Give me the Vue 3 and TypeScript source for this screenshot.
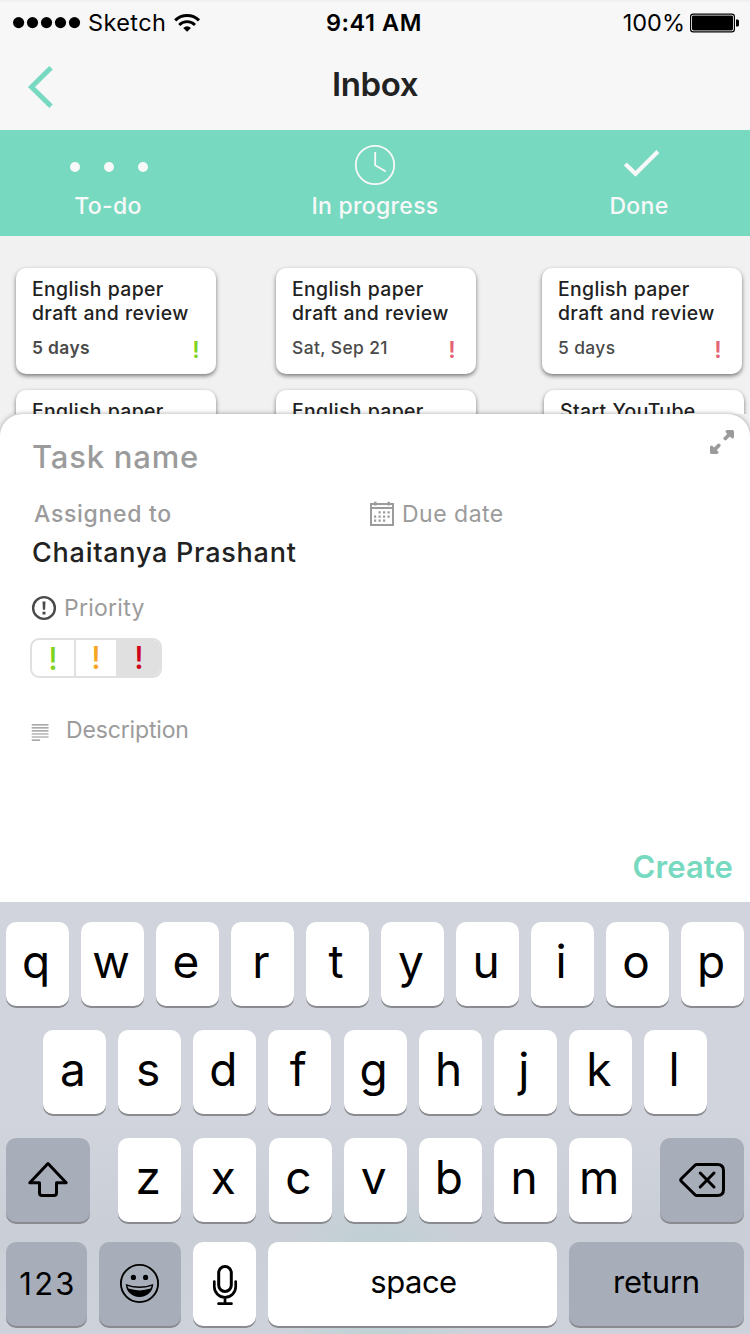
<script setup lang="ts">
interface Task {
  title: string[]
  due?: string
  level?: 'low' | 'high'
  strong?: boolean
}
interface Column {
  id: string
  tasks: Task[]
}

const columns: Column[] = [
  {
    id: 'todo',
    tasks: [
      { title: ['English paper', 'draft and review'], due: '5 days', level: 'low', strong: true },
      { title: ['English paper'] },
    ],
  },
  {
    id: 'progress',
    tasks: [
      { title: ['English paper', 'draft and review'], due: 'Sat, Sep 21', level: 'high' },
      { title: ['English paper'] },
    ],
  },
  {
    id: 'done',
    tasks: [
      { title: ['English paper', 'draft and review'], due: '5 days', level: 'high' },
      { title: ['Start YouTube'] },
    ],
  },
]

const topRow = 'qwertyuiop'.split('')
const midRow = 'asdfghjkl'.split('')
const lowRow = 'zxcvbnm'.split('')
const signalDots = [6.6, 20.5, 34.5, 48.5, 62.5]
</script>

<template>
  <div class="screen">
    <header class="top">
      <div class="status">
        <div class="carrier">
          <svg class="signal" width="70" height="14" viewBox="0 0.4 70 14">
            <circle v-for="x in signalDots" :key="x" :cx="x" cy="7" r="5.6" />
          </svg>
          <span class="carrier-name">Sketch</span>
          <svg width="28" height="20" viewBox="174 12 28 20" fill="none" stroke="#000">
            <path d="M176.2 19.4a17 17 0 0 1 23.8 0" stroke-width="3" />
            <path d="M180.2 23.9a11.2 11.2 0 0 1 15.8 0" stroke-width="2.8" />
            <path d="M184.2 27q3.9-3.6 7.8 0l-3.9 3.8z" fill="#000" stroke="none" />
          </svg>
        </div>
        <span class="time">9:41 AM</span>
        <div class="battery">
          <span class="percent">100%</span>
          <svg width="50" height="20" viewBox="690 12.5 50 20">
            <rect x="690.6" y="13.6" width="43.8" height="17.8" rx="2.6" fill="#fff" stroke="#000" stroke-width="1.2" />
            <rect x="692" y="15" width="41" height="15" rx="1.4" />
            <path d="M736 19h1.5q1.5 0 1.5 1.5v4q0 1.500-1.500 1.500h-1.500z" />
          </svg>
        </div>
      </div>
      <div class="nav">
        <svg class="back" width="30" height="46" viewBox="26.300 64 30 46" fill="none" stroke="#77d9c0" stroke-width="5">
          <path d="M51.300 67.700L31.800 87l19.500 19.300" />
        </svg>
        <h1>Inbox</h1>
      </div>
    </header>

    <nav class="tabs">
      <div class="tab tab-todo">
        <svg width="82" height="44" viewBox="67 143 82 44" fill="#f8f8f8">
          <circle cx="75" cy="167" r="5" /><circle cx="109" cy="167" r="5" /><circle cx="143" cy="167" r="5" />
        </svg>
        <span>To-do</span>
      </div>
      <div class="tab tab-progress">
        <svg width="44" height="44" viewBox="353 143 44 44" fill="none" stroke="#f8f8f8">
          <circle cx="375" cy="165" r="19.200" stroke-width="1.800" />
          <path d="M375.200 152v13.200l10.600 6.300" stroke-width="1.800" />
        </svg>
        <span>In progress</span>
      </div>
      <div class="tab tab-done">
        <svg width="44" height="44" viewBox="617 143 44 44" fill="none" stroke="#f8f8f8" stroke-width="4.200">
          <path d="M625.300 164l10.200 9.700 22.400-22.200" />
        </svg>
        <span>Done</span>
      </div>
    </nav>

    <main class="board">
      <div v-for="col in columns" :key="col.id" class="column" :class="col.id">
        <article v-for="(task, i) in col.tasks" :key="i" class="card">
          <div class="card-title">
            <div v-for="line in task.title" :key="line">{{ line }}</div>
          </div>
          <div v-if="task.due" class="card-foot">
            <span class="due" :class="{ strong: task.strong }">{{ task.due }}</span>
            <span class="flag" :class="task.level">!</span>
          </div>
        </article>
      </div>
    </main>

    <section class="sheet">
      <div class="sheet-head">
        <span class="task-name">Task name</span>
        <svg class="expand" width="26" height="26" viewBox="709 429 26 26" fill="#9b9b9b" stroke="#9b9b9b" stroke-linecap="round" stroke-linejoin="round">
          <path d="M727 431.500h5.500v5.500z" stroke-width="3" />
          <path d="M725.300 438.500l5-5" stroke-width="3.800" />
          <path d="M717 452.500h-5.500v-5.500z" stroke-width="3" />
          <path d="M718.700 445.500l-5 5" stroke-width="3.800" />
        </svg>
      </div>
      <div class="meta">
        <span class="assigned">Assigned to</span>
        <div class="due-date">
          <svg width="26" height="28" viewBox="369 500 26 28" fill="#9b9b9b">
            <path d="M370 503h24v23h-24zM372 509v15h20v-15zM372 505v2h20v-2z" fill-rule="evenodd" />
            <path d="M374 501.800h2.500v3.600h-2.500zM387.500 501.800h2.500v3.600h-2.500z" />
            <path d="M378.500 511.300h2.200v2.200h-2.200zM383 511.300h2.200v2.200h-2.200zM387.500 511.300h2.200v2.200h-2.200zM374 515.500h2.200v2.200h-2.200zM378.500 515.500h2.200v2.200h-2.200zM383 515.500h2.200v2.200h-2.200zM387.500 515.500h2.200v2.200h-2.200zM374 519.600h2.200v2.200h-2.200zM378.500 519.600h2.200v2.200h-2.200zM383 519.600h2.200v2.200h-2.200z" />
          </svg>
          <span>Due date</span>
        </div>
      </div>
      <div class="assignee">Chaitanya Prashant</div>
      <div class="priority-label">
        <svg width="26" height="26" viewBox="31 595 26 26">
          <circle cx="44" cy="608" r="10.900" fill="none" stroke="#4a4a4a" stroke-width="2.400" />
          <path d="M42.500 601.500h3l-.4 8.300h-2.200zM42.500 611.700h3v2.900h-3z" fill="#4a4a4a" />
        </svg>
        <span>Priority</span>
      </div>
      <div class="segments">
        <span class="seg low">!</span>
        <span class="seg medium">!</span>
        <span class="seg high active">!</span>
      </div>
      <div class="description">
        <svg width="18" height="18" viewBox="31 721.500 18 18" stroke="#8f8f8f" stroke-width="1.200">
          <path d="M31.700 723.300h16.800M31.700 726.400h16.800M31.700 729.400h16.800M31.700 732.500h16.800M31.700 735.500h16.800M31.700 738.600h8.400" />
        </svg>
        <span>Description</span>
      </div>
      <button class="create" type="button">Create</button>
    </section>

    <section class="keyboard">
      <div class="row">
        <span v-for="k in topRow" :key="k" class="key"><span class="glyph">{{ k }}</span></span>
      </div>
      <div class="row middle">
        <span v-for="k in midRow" :key="k" class="key"><span class="glyph">{{ k }}</span></span>
      </div>
      <div class="row">
        <span class="key dark wide">
          <svg width="84" height="84" viewBox="6 1138 84 84" fill="none" stroke="#000" stroke-width="3" stroke-linejoin="round">
            <path d="M48 1163.500l18.200 19.200h-9.700V1193q0 2.500-2.500 2.500h-12q-2.500 0-2.500-2.500v-10.300h-9.700z" />
          </svg>
        </span>
        <div class="letters">
          <span v-for="k in lowRow" :key="k" class="key"><span class="glyph">{{ k }}</span></span>
        </div>
        <span class="key dark wide">
          <svg width="84" height="84" viewBox="660 1138 84 84" fill="none" stroke="#000" stroke-width="3" stroke-linejoin="round" stroke-linecap="round">
            <path d="M697 1164.500h20.500q6 0 6 6v19q0 6-6 6H697q-1.200 0-2-.8l-13.500-13.200q-1.500-1.500 0-3l13.500-13.200q.8-.8 2-.8z" />
            <path d="M700.200 1173l13.800 14M714 1173l-13.800 14" />
          </svg>
        </span>
      </div>
      <div class="row bottom">
        <span class="key dark numbers"><span class="digits">123</span></span>
        <span class="key dark emoji">
          <svg width="82" height="84" viewBox="99 1242 82 84">
            <circle cx="139.500" cy="1283.500" r="18.600" fill="none" stroke="#000" stroke-width="1.900" />
            <circle cx="133.400" cy="1277.400" r="2.600" /><circle cx="145.600" cy="1277.400" r="2.600" />
            <path d="M125.700 1284q13.800 5 27.600 0c-.5 7.500-6 13-13.800 13s-13.300-5.500-13.800-13z" />
            <path d="M127.300 1286q12.200 3.800 24.400 0l-1.200 2.600q-11 3.600-22 0z" fill="#a7adb9" />
          </svg>
        </span>
        <span class="key">
          <svg width="63" height="84" viewBox="193 1242 63 84" fill="none" stroke="#000" stroke-width="3" stroke-linecap="round">
            <rect x="218.700" y="1266.500" width="12.600" height="25" rx="6.300" />
            <path d="M214.300 1281.500v5.200a10.700 10.700 0 0 0 21.400 0v-5.200M225 1297.500v6M218.500 1303.700h13" stroke-width="2.700" />
          </svg>
        </span>
        <span class="key space"><span class="word">space</span></span>
        <span class="key dark return"><span class="word">return</span></span>
      </div>
    </section>
  </div>
</template>

<style>
html,
body {
  margin: 0;
  overflow: hidden;
}
</style>

<style scoped>
.screen,
.screen * {
  box-sizing: border-box;
}
.screen {
  width: 750px;
  height: 1334px;
  display: flex;
  flex-direction: column;
  overflow: hidden;
  background: #f1f1f1;
  font-family: Inter, "Liberation Sans", sans-serif;
  color: #222;
  white-space: nowrap;
}
svg {
  display: block;
  flex: none;
}
.top {
  height: 130px;
  border-top: 2px solid #f1f1f1;
  background: #f7f7f7;
}
.status {
  height: 42px;
  padding: 0 10px 0 12px;
  display: grid;
  grid-template-columns: 354px 1fr auto;
  align-items: center;
  font-size: 23.5px;
  line-height: 42px;
  color: #000;
}
.carrier,
.battery {
  display: flex;
  align-items: center;
}
.carrier {
  width: 314px;
}
.status {
  grid-template-columns: 314px 1fr auto;
}
.battery {
  justify-content: flex-end;
  gap: 5px;
}
.carrier-name {
  margin-left: 6px;
  margin-right: 7px;
  letter-spacing: 0.4px;
}
.time {
  font-weight: 600;
  letter-spacing: 0.55px;
}
.percent {
  letter-spacing: 0;
}
.nav {
  height: 84px;
  display: grid;
  grid-template-columns: 1fr auto 1fr;
  padding: 0 26px;
}
.back {
  margin-top: 20px;
}
h1 {
  margin: 0;
  grid-column: 2;
  font-size: 33px;
  font-weight: 600;
  line-height: 80px;
  letter-spacing: -0.4px;
}
.tabs {
  height: 106px;
  background: #77d9c0;
  color: #f8f8f8;
  display: flex;
  justify-content: space-between;
  padding: 13px 38px 0 35px;
}
.tab {
  display: flex;
  flex-direction: column;
  align-items: center;
  width: 146px;
  font-size: 23px;
  font-weight: 500;
  line-height: 38px;
  letter-spacing: 0.3px;
}
.tab-progress {
  width: 160px;
  margin-left: 3px;
}
.board {
  height: 178px;
  display: flex;
  padding: 32px 0 0 16px;
  overflow: hidden;
}
.column {
  width: 200px;
  flex: none;
  display: flex;
  flex-direction: column;
  gap: 16px;
}
.column.progress {
  margin-left: 60px;
}
.column.done {
  margin-left: 66px;
}
.column.done .card + .card {
  margin-left: 2px;
  margin-right: -2px;
}
.card {
  height: 106px;
  flex: none;
  padding: 9px 16px 0;
  border-radius: 10px;
  background: #fff;
  box-shadow: 0 2px 4px rgba(0, 0, 0, 0.5);
}
.card-title {
  font-size: 19.4px;
  font-weight: 500;
  line-height: 24px;
  letter-spacing: 0.38px;
  word-spacing: 0.3px;
}
.card-foot {
  display: flex;
  justify-content: space-between;
  height: 46px;
}
.due {
  font-size: 17.4px;
  font-weight: 500;
  line-height: 45px;
  letter-spacing: 0.4px;
  color: #4a4a4a;
}
.due.strong {
  font-weight: 600;
}
.flag {
  width: 12px;
  margin-right: 2px;
  text-align: center;
  font-size: 23px;
  font-weight: 600;
  line-height: 50px;
}
.todo .flag {
  margin-right: -2px;
}
.low {
  color: #7ed321;
}
.medium {
  color: #f5a623;
}
.high {
  color: #d0021b;
}
.flag.high {
  color: #e56473;
}
.sheet {
  height: 488px;
  position: relative;
  display: flex;
  flex-direction: column;
  background: #fff;
  border-radius: 22px 22px 0 0;
  box-shadow: 0 0 5px rgba(0, 0, 0, 0.35);
  color: #9b9b9b;
}
.sheet-head {
  height: 80px;
  padding: 15px 15px 0 32px;
  display: flex;
  justify-content: space-between;
}
.task-name {
  font-size: 31px;
  font-weight: 500;
  line-height: 56px;
  letter-spacing: 0.8px;
}
.meta {
  height: 40px;
  display: grid;
  grid-template-columns: 335px 1fr;
  padding-left: 34px;
  font-size: 23px;
  line-height: 40px;
}
.assigned {
  font-weight: 500;
  letter-spacing: 0.7px;
}
.due-date {
  display: flex;
  align-items: center;
  gap: 7px;
  letter-spacing: 0.5px;
}
.assignee {
  height: 36px;
  padding-left: 32px;
  font-size: 27px;
  font-weight: 500;
  line-height: 38px;
  letter-spacing: 0.75px;
  color: #222;
}
.priority-label {
  height: 36px;
  margin-top: 20px;
  padding-left: 31px;
  display: flex;
  align-items: center;
  gap: 7px;
  font-size: 23px;
  line-height: 36px;
  letter-spacing: 0.25px;
}
.segments {
  width: 132px;
  height: 40px;
  margin: 12px 0 0 30px;
  display: grid;
  grid-template-columns: 44px 40px 44px;
  border: 2px solid #e0e0e0;
  border-radius: 9px;
  overflow: hidden;
}
.seg {
  text-align: center;
  font-size: 31px;
  font-weight: 500;
  line-height: 35px;
}
.seg.low {
  border-right: 2px solid #e0e0e0;
  line-height: 37px;
}
.seg.active {
  padding-left: 2px;
  background: #e0e0e0;
}
.description {
  height: 36px;
  margin-top: 34px;
  padding-left: 31px;
  display: flex;
  align-items: center;
  gap: 17px;
  font-size: 23px;
  line-height: 36px;
  letter-spacing: -0.15px;
}
.description svg {
  margin-top: 3px;
}
.create {
  align-self: flex-end;
  margin: 97px 17px 0 0;
  padding: 0;
  border: 0;
  background: none;
  font-family: inherit;
  font-size: 31px;
  font-weight: 600;
  line-height: 44px;
  letter-spacing: 0.1px;
  color: #77d9c0;
}
.keyboard {
  position: relative;
  height: 432px;
  padding: 20px 6px 0;
  display: flex;
  flex-direction: column;
  gap: 24px;
  color: #000;
  background:
    radial-gradient(ellipse 95px 110px at 377px 390px, rgba(174, 210, 207, 0.65), rgba(174, 210, 207, 0) 100%),
    linear-gradient(#d1d4dc 50%, #cacfd7 75%, #ced2da);
}
.row {
  height: 84px;
  flex: none;
  display: flex;
  justify-content: space-between;
}
.middle {
  padding: 0 37px;
}
.bottom {
  margin-top: -4px;
}
.letters {
  width: 514px;
  margin-left: 0.4px;
  display: flex;
  justify-content: space-between;
}
.key {
  width: 63px;
  height: 84px;
  flex: none;
  border-radius: 10px;
  background: #fff;
  box-shadow: 0 2px 0 #898b90;
  text-align: center;
}
.wide {
  width: 84px;
}
.dark {
  background: #a7adb9;
}
.glyph {
  display: block;
  padding-right: 3px;
  font-size: 46px;
  line-height: 79px;
}
.numbers {
  width: 81px;
}
.emoji {
  width: 82px;
}
.space {
  width: 289px;
}
.return {
  width: 175px;
}
.digits {
  display: block;
  padding-left: 3px;
  font-size: 31px;
  line-height: 83px;
  letter-spacing: 2.2px;
}
.word {
  display: block;
  font-size: 31px;
  line-height: 79px;
}
.space .word {
  padding-left: 2px;
  letter-spacing: -0.5px;
}
.return .word {
  letter-spacing: -0.2px;
}
</style>
